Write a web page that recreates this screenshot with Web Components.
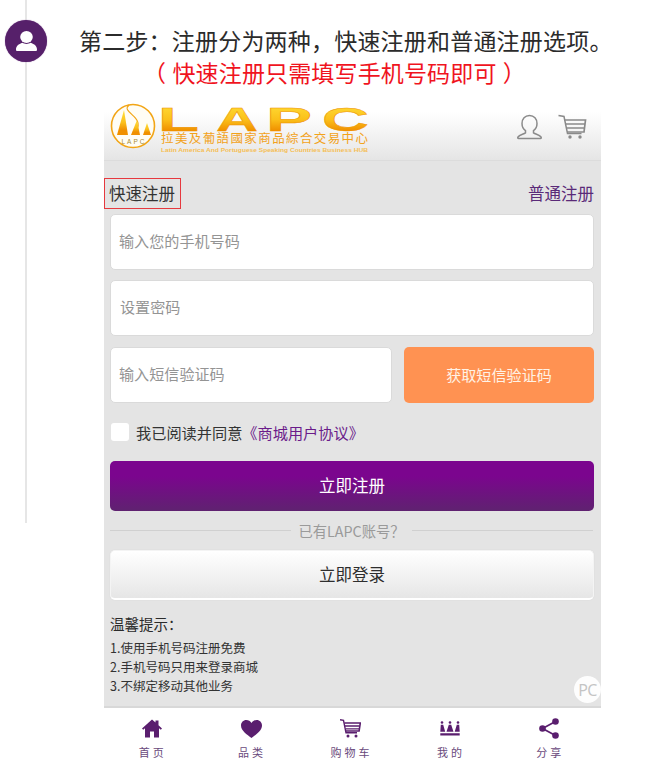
<!DOCTYPE html>
<html lang="zh"><head><meta charset="utf-8"><title>LAPC</title>
<style>
html,body{margin:0;padding:0;background:#fff;overflow:hidden}
body{font-family:"Noto Sans CJK SC","Noto Sans",sans-serif;color:#333;width:650px;height:775px}
</style></head><body>
<guide-page>
  <step-title>
    <span>第二步：注册分为两种，快速注册和普通注册选项。</span>
    <span slot="note">（ 快速注册只需填写手机号码即可 ）</span>
  </step-title>
  <phone-frame>
    <app-header></app-header>
    <reg-form>
      <form-tabs></form-tabs>
      <form-field>输入您的手机号码</form-field>
      <form-field style="margin-top:10px;--ph-left:9px">设置密码</form-field>
      <code-row></code-row>
      <agree-row></agree-row>
      <action-button kind="primary" style="margin-top:20px">立即注册</action-button>
      <or-divider>已有LAPC账号？</or-divider>
      <action-button kind="light">立即登录</action-button>
      <tips-box></tips-box>
      <pc-badge>PC</pc-badge>
    </reg-form>
    <bottom-nav></bottom-nav>
  </phone-frame>
</guide-page>
<script>
function def(name, html, init){
  customElements.define(name, class extends HTMLElement{
    constructor(){super();this.attachShadow({mode:'open'}).innerHTML=html;}
    connectedCallback(){ if(init) init(this); }
  });
}
def('guide-page',`<style>
:host{display:grid;grid-template-columns:52px 1fr;width:650px;height:775px;overflow:hidden}
.rail{height:523px;position:relative}
.rail::before{content:"";display:block;width:2px;height:100%;margin-left:25px;background:#e6e6e6}
.avatar{position:absolute;left:5px;top:20px;width:42px;height:42px;border-radius:50%;background:#56206a;display:flex;align-items:center;justify-content:center;box-shadow:0 0 1px #8a5a9a}
.main{display:flex;flex-direction:column;min-width:0}
</style>
<div class="rail"><div class="avatar"><svg width="21" height="20" viewBox="0 0 21 20" fill="#fff"><ellipse cx="10.500" cy="6" rx="6.300" ry="6"/><path d="M0 18.500c0-3.500 2.500-5.200 6.500-6.700 2 1.500 6 1.500 8 0 4 1.500 6.500 3.200 6.500 6.700 0 1-.5 1.500-1.300 1.500H1.300C.5 20 0 19.500 0 18.500z"/></svg></div></div>
<div class="main"><slot></slot></div>`);
def('step-title',`<style>
:host{display:block;padding:25px 0 0 27px;height:96px;box-sizing:border-box;white-space:nowrap}
.a{font-size:23px;line-height:31px;color:#2b2b2b;letter-spacing:.2px}
.b{font-size:23px;line-height:31px;margin-top:1px;color:#f0141e;padding-left:64px;letter-spacing:.15px;word-spacing:1px}
</style><div class="a"><slot></slot></div><div class="b"><slot name="note"></slot></div>`);
def('phone-frame',`<style>:host{display:flex;flex-direction:column;width:497px;margin-left:52px;height:679px;position:relative}</style><slot></slot>`);
def('app-header',`<style>
:host{display:flex;align-items:flex-start;height:65px;background:linear-gradient(#fff 25%,#e5e5e5);border-bottom:1px solid #dcdcdc;box-sizing:border-box;padding-left:6px}
svg{display:block}
.sp{flex:1}
.u{margin:18px 15px 0 0}.c{margin:18px 14px 0 0}
text{font-family:"Liberation Sans",sans-serif}
</style>
<svg class="logo" width="260" height="64" viewBox="110 96 260 64">
<defs><linearGradient id="g" x1="0" y1="0" x2="0" y2="1"><stop offset="0" stop-color="#ffe13a"/><stop offset=".5" stop-color="#fbc01a"/><stop offset=".8" stop-color="#f09000"/></linearGradient></defs>
<circle cx="133" cy="126" r="21.500" fill="#fffdf5" stroke="#f2a516" stroke-width="1.600"/>
<path d="M129 105c-7 6 8 10 9 18 1 5-3 8-5 9" fill="none" stroke="#f2a516" stroke-width="1.200"/>
<path d="M124 110l-7 25h11z" fill="url(#g)"/><path d="M137 120l-6 15h9z" fill="url(#g)"/><path d="M147 123l-4 12h8z" fill="url(#g)"/>
<text x="133" y="143.500" font-size="6.500" text-anchor="middle" fill="#a88a30" textLength="23" lengthAdjust="spacing">LAPC</text>
<g fill="url(#g)" stroke="#ee9400" stroke-width=".4" font-weight="700" font-size="33">
<text x="158" y="131" textLength="41" lengthAdjust="spacingAndGlyphs">L</text>
<text x="216" y="131" textLength="42" lengthAdjust="spacingAndGlyphs">A</text>
<text x="266" y="131" textLength="46" lengthAdjust="spacingAndGlyphs">P</text>
<text x="322" y="131" textLength="47" lengthAdjust="spacingAndGlyphs">C</text>
</g>
<text x="161" y="143" font-size="12.500" style="font-family:'Noto Sans CJK TC'" fill="#f2a21a" textLength="207" lengthAdjust="spacing">拉美及葡語國家商品綜合交易中心</text>
<text x="161" y="151.500" font-size="6" font-weight="700" fill="#f5be55" textLength="207" lengthAdjust="spacingAndGlyphs">Latin America And Portuguese Speaking Countries Business HUB</text>
</svg>
<span class="sp"></span>
<svg class="u" width="27" height="26" viewBox="0 0 27 26" fill="none" stroke="#8a8a8a" stroke-width="1.500"><path d="M13.500 1.500c-4.600 0-7.500 3.400-7.500 8 0 3 1.300 5.600 3.500 7.200v2.100c-2 1.500-6 2-7.500 4.200-.5.800-.3 1.500.6 1.500h21.800c.9 0 1.100-.7.600-1.500-1.500-2.200-5.500-2.700-7.500-4.200v-2.100c2.200-1.600 3.500-4.200 3.500-7.200 0-4.600-2.900-8-7.500-8z"/></svg>
<svg class="c" width="29" height="26" viewBox="0 0 29 26" fill="none" stroke="#8a8a8a"><path d="M.5 1.500l5.500 1 3.500 17h14" stroke-width="1.500"/><path d="M6.500 6h21l-1.500 12H9M7.500 10h19M8 14h18" stroke-width="1.700"/><circle cx="12" cy="23" r="1.700" fill="#8a8a8a" stroke="none"/><circle cx="22" cy="23" r="1.700" fill="#8a8a8a" stroke="none"/></svg>`);
def('reg-form',`<style>:host{display:flex;flex-direction:column;height:547px;box-sizing:border-box;background:#e4e4e4;padding:0 7px 0 6px;border-bottom:2px solid #d8d8d8;position:relative}</style><slot></slot>`);
def('form-tabs',`<style>
:host{display:flex;justify-content:space-between;align-items:center;margin:17px 0 5px -6px;font-size:16.500px;line-height:24px;height:31px}
.on{border:1px solid #e6393f;height:31px;box-sizing:border-box;padding:0 5px 1px 4px;display:flex;align-items:center;color:#333}
.off{color:#5a2a78;padding-bottom:1px}
</style><span class="on">快速注册</span><span class="off">普通注册</span>`);
def('form-field',`<style>
:host{display:flex;align-items:center;height:56px;box-sizing:border-box;background:#fff;border-radius:5px;border:1px solid #dadada;padding:0 0 4px var(--ph-left,8px);font-size:15.100px;color:#949494}
</style><slot></slot>`);
def('code-row',`<style>
:host{display:grid;grid-template-columns:282px 190px;gap:12px;margin-top:11px}
.b{display:flex;align-items:center;justify-content:center;height:56px;padding-bottom:2px;box-sizing:border-box;border-radius:5px;background:#ff9252;color:#fff2e6;font-size:15.100px}
</style><form-field>输入短信验证码</form-field><div class="b">获取短信验证码</div>`);
def('agree-row',`<style>
:host{display:flex;align-items:center;height:18px;margin-top:20px;font-size:15.200px;color:#333;white-space:nowrap}
i{display:block;width:18px;height:18px;margin:0 7px 0 1px;background:#fff;border-radius:3px}
b{font-weight:400;color:#6a1b8a;margin-left:0}
</style><i></i><span>我已阅读并同意</span><b>《商城用户协议》</b>`);
def('action-button',`<style>
:host{display:flex;align-items:center;justify-content:center;height:50px;box-sizing:border-box;border-radius:5px;font-size:16.500px;padding-bottom:2px}
:host([kind=primary]){background:linear-gradient(#7b058e 30%,#5f2270);color:#fff}
:host([kind=light]){background:linear-gradient(#fff,#e6e6e6);border:1px solid #f4f4f4;border-bottom:2px solid #fff;color:#2e2e2e;box-shadow:0 0 1px #ccc}
</style><slot></slot>`);
def('or-divider',`<style>
:host{display:flex;align-items:center;height:39px;font-family:"Noto Sans CJK TC","Noto Sans",sans-serif;font-size:14.300px;color:#9a9a9a;gap:7px;margin-right:1px}
:host::before,:host::after{content:"";flex:1;height:1px;background:#d0d0d0}
</style><slot></slot>`);
def('tips-box',`<style>
:host{display:block;padding-top:14px;color:#333;font-size:12.500px;line-height:19px;white-space:nowrap}
h4{margin:0 0 4px;font-weight:400;font-size:14.500px;line-height:20px;color:#2b2b2b}
</style><h4>温馨提示：</h4><div>1.使用手机号码注册免费</div><div>2.手机号码只用来登录商城</div><div>3.不绑定移动其他业务</div>`);
def('pc-badge',`<style>
:host{position:absolute;right:0;top:515px;width:27px;height:27px;border-radius:50%;background:#fdfdfd;color:#c4c4c4;display:flex;align-items:center;justify-content:center;font:16px "Open Sans",sans-serif;letter-spacing:-.5px}
</style><slot></slot>`);
def('bottom-nav',`<style>
:host{display:grid;grid-template-columns:repeat(5,1fr);margin-left:-2px;width:497px;height:67px;background:#fff}
</style>
<nav-item label="首页"><svg width="20" height="19" viewBox="0 0 20 19" fill="#5a1e6e"><path d="M10 .5L0 9.500l1.200 1.300L3 9.300V18.500h5v-6h4v6h5V9.300l1.800 1.500L20 9.500 16.500 6.300V1.500h-3v2z"/></svg></nav-item>
<nav-item label="品类"><svg width="21" height="18" viewBox="0 0 21 18" fill="#5a1e6e"><path d="M10.500 18C6 14.500 0 10.800 0 5.500 0 2.400 2.300 0 5.300 0c2.200 0 4.100 1.200 5.200 3C11.600 1.200 13.500 0 15.700 0 18.700 0 21 2.400 21 5.500c0 5.300-6 9-10.500 12.500z"/></svg></nav-item>
<nav-item label="购物车"><svg width="21" height="19" viewBox="0 0 21 19" fill="none" stroke="#5a1e6e"><path d="M0 .7l3.500.6 2.500 12.500h11" stroke-width="1.400"/><path d="M4.300 4h16l-1.200 8H6" stroke-width="1.600"/><path d="M5 7h14.500M5.500 9.800h13.500" stroke-width="1.300"/><circle cx="8" cy="17" r="1.500" fill="#5a1e6e" stroke="none"/><circle cx="16" cy="17" r="1.500" fill="#5a1e6e" stroke="none"/></svg></nav-item>
<nav-item label="我的"><svg width="20" height="15" viewBox="0 0 20 15" fill="#5a1e6e"><circle cx="2" cy="1.500" r="1.300"/><circle cx="10" cy="1.500" r="1.300"/><circle cx="18" cy="1.500" r="1.300"/><path d="M.8 3.800h2.400l2 7H.3zM8.800 3.800h2.400l2.300 7h-7zM16.800 3.800h2.400l.5 7h-5zM.3 12.300h19.400v2.200H.3z"/></svg></nav-item>
<nav-item label="分享"><svg width="20" height="21" viewBox="0 0 20 21" fill="#5a1e6e"><circle cx="16.500" cy="3.500" r="3.300"/><circle cx="16.500" cy="17.500" r="3.300"/><circle cx="3.500" cy="10.500" r="3.300"/><path d="M3.500 10.500L16.500 3.500M3.500 10.500l13 7" stroke="#5a1e6e" stroke-width="1.700"/></svg></nav-item>`);
def('nav-item',`<style>
:host{display:flex;flex-direction:column;align-items:center}
.i{height:21px;margin-top:10px;display:flex;align-items:center;justify-content:center}
svg{display:block}
.l{margin-top:5px;font-size:11px;line-height:16px;letter-spacing:3px;padding-left:2px;color:#6a4a7c}
</style><div class="i"><slot></slot></div><div class="l"></div>`, el=>{el.shadowRoot.querySelector('.l').textContent=el.getAttribute('label');});
</script>
</body></html>
